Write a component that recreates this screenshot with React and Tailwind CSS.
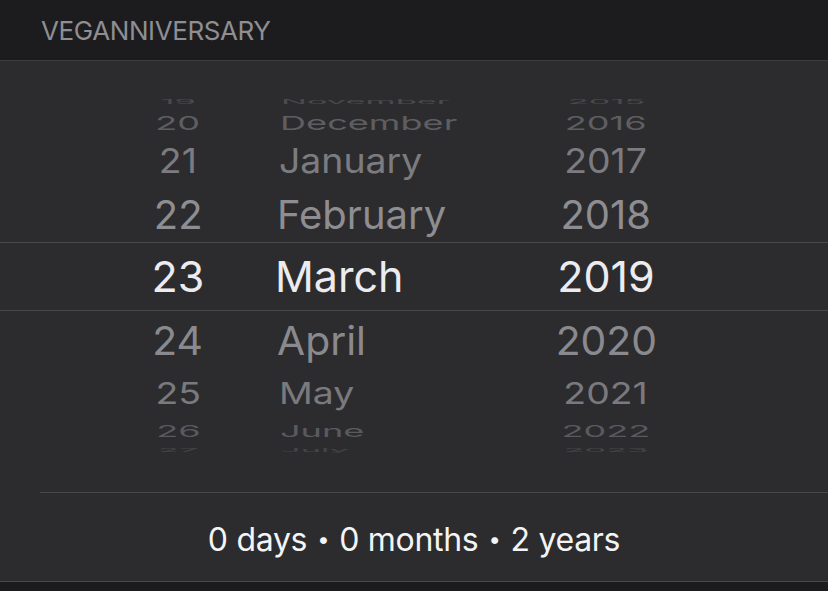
import React from 'react';

const rows = [
  { d: '19', m: 'November', y: '2015', h: 22, sx: 0.8, sy: 0.15, c: '#4a4a4d' },
  { d: '20', m: 'December', y: '2016', h: 22, sx: 0.84, sy: 0.45, c: '#5e5e62' },
  { d: '21', m: 'January', y: '2017', h: 52, sx: 0.87, sy: 0.78, c: '#7c7c80' },
  { d: '22', m: 'February', y: '2018', h: 56, sx: 0.93, sy: 0.92, c: '#8e8e92' },
  { d: '23', m: 'March', y: '2019', h: 69, sx: 1, sy: 1, c: '#ececf0' },
  { d: '24', m: 'April', y: '2020', h: 58, sx: 0.95, sy: 0.93, c: '#8a8a8e' },
  { d: '25', m: 'May', y: '2021', h: 48, sx: 0.87, sy: 0.7, c: '#7a7a7e' },
  { d: '26', m: 'June', y: '2022', h: 28, sx: 0.84, sy: 0.38, c: '#5a5a5e' },
  { d: '27', m: 'July', y: '2023', h: 10, sx: 0.8, sy: 0.12, c: '#454548' },
];

const WheelRow = ({ row, selected }) => {
  // far rows get squashed like the iOS wheel
  const t = { transform: `scale(${row.sx}, ${row.sy})`, color: row.c };
  const off = { marginLeft: (1 - row.sx) * 30 };
  return (
    <div
      className={`flex items-center pl-[128px] text-[43px] leading-none ${selected ? 'border-y border-[#48484b]' : ''}`}
      style={{ height: row.h }}
    >
      <div className="w-[100px] flex justify-center">
        <span className="inline-block origin-center" style={t}>{row.d}</span>
      </div>
      <div className="w-[318px] pl-[47px] flex">
        <span className="inline-block origin-left" style={{ ...t, ...off }}>{row.m}</span>
      </div>
      <div className="w-[120px] flex justify-center">
        <span className="inline-block origin-center" style={t}>{row.y}</span>
      </div>
    </div>
  );
};

const Dot = () => <span className="mx-[10px] text-[22px] align-middle">•</span>;

export default function App() {
  return (
    <div className="w-[828px] h-[591px] bg-[#1c1c1e] overflow-hidden" style={{ fontFamily: 'Inter, "Noto Sans", sans-serif' }}>
      {/* Section header */}
      <div className="h-[61px] flex items-center pl-[41px] border-b border-[#3d3d40]">
        <span className="text-[26px] text-[#8e8e93] tracking-[-0.4px]">VEGANNIVERSARY</span>
      </div>

      {/* Card */}
      <div className="bg-[#2c2c2e] border-b border-[#48484b]">
        {/* Picker */}
        <div className="pt-[29px] pb-[37px] overflow-hidden">
          {rows.map((r) => (
            <WheelRow key={r.d} row={r} selected={r.d === '23'} />
          ))}
        </div>

        {/* Summary */}
        <div className="ml-[40px] border-t border-[#48484b]">
          <div className="h-[88px] pt-[5px] flex items-center justify-center -ml-[40px] text-[32px] tracking-[-0.3px] text-[#f4f4f6]">
            <span>0 days</span>
            <Dot />
            <span>0 months</span>
            <Dot />
            <span>2 years</span>
          </div>
        </div>
      </div>
    </div>
  );
}
